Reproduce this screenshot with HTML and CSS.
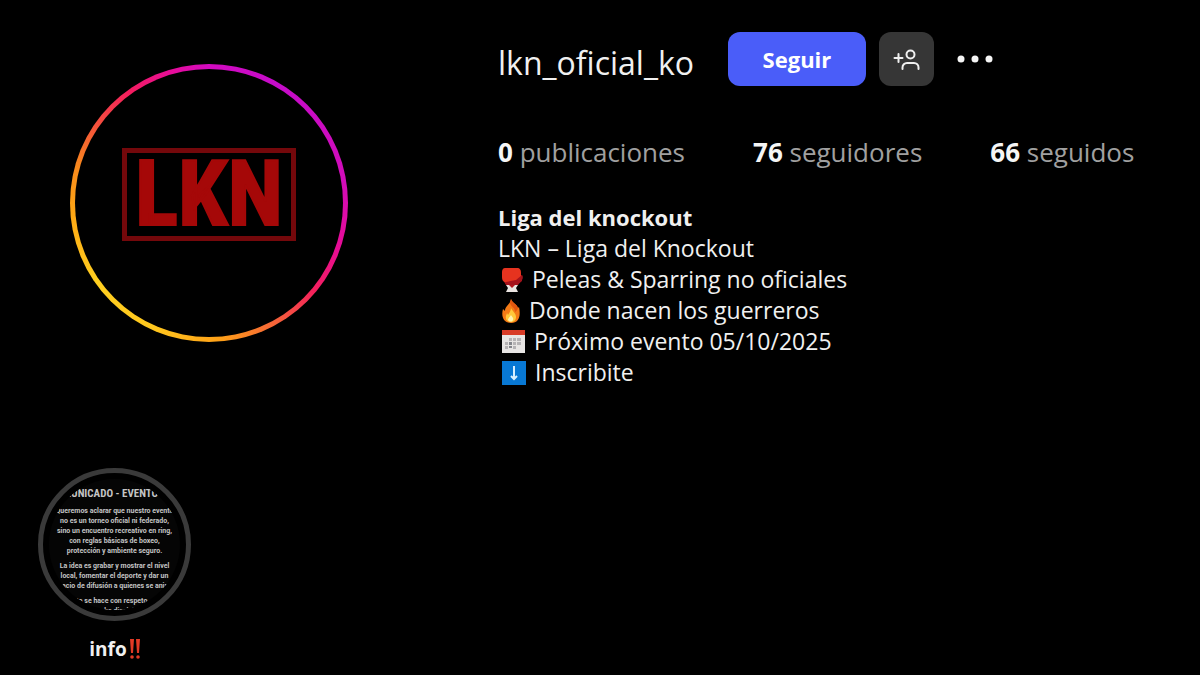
FILE: index.html
```
<!DOCTYPE html>
<html lang="es">
<head>
  <meta charset="utf-8">
  <meta name="viewport" content="width=device-width, initial-scale=1">
  <title>lkn_oficial_ko</title>
  <link rel="stylesheet" href="styles.css">
</head>
<body>
  <main class="profile">
    <header class="profile-header">
      <a href="#" class="avatar" aria-label="Foto del perfil de lkn_oficial_ko">
        <span class="avatar-photo"><span class="logo">LKN</span></span>
      </a>

      <section class="info">
        <div class="actions">
          <h1 class="username">lkn_oficial_ko</h1>
          <button type="button" class="btn btn-follow">Seguir</button>
          <button type="button" class="btn btn-similar" aria-label="Cuentas similares">
            <svg width="28" height="24" viewBox="0 0 28 24" fill="none" stroke="#f0f0f0" stroke-width="2" stroke-linecap="round">
              <path d="M2.500 11h8M6.500 7v8"/>
              <circle cx="18.500" cy="7.500" r="4"/>
              <path d="M10.500 22v-1.500a4.500 4.500 0 0 1 4.500-4.500h7a4.500 4.500 0 0 1 4.500 4.500V22"/>
            </svg>
          </button>
          <button type="button" class="btn btn-more" aria-label="Opciones">
            <svg width="36" height="8" viewBox="0 0 36 8" fill="#f5f5f5">
              <circle cx="4" cy="4" r="3.500"/>
              <circle cx="18" cy="4" r="3.500"/>
              <circle cx="32" cy="4" r="3.500"/>
            </svg>
          </button>
        </div>

        <ul class="stats">
          <li><strong>0</strong> publicaciones</li>
          <li><a href="#"><strong>76</strong> seguidores</a></li>
          <li><a href="#"><strong>66</strong> seguidos</a></li>
        </ul>

        <div class="bio">
          <p class="bio-name">Liga del knockout</p>
          <p>LKN – Liga del Knockout</p>
          <p class="bio-item">
            <svg width="21" height="24" viewBox="0 0 21 24">
              <path fill="#b3161c" d="M1 12h15l4-5c1 1 1 3 0 5l-4 5H4z"/>
              <path fill="#e6331f" d="M3 0h12c3 0 4 2 4 5v6c0 2-2 3-4 3H4c-3 0-4-2-4-5V4c0-2 1-4 3-4z"/>
              <path fill="#a5121b" d="M14 12l6-5v6l-5 4H4v-3z"/>
              <path fill="#ebe4e1" d="M4 17h12l-2 3 2 4H4l2-4z"/>
              <path fill="#b3161c" d="M7 17h6l-3 3z"/>
            </svg>
            Peleas &amp; Sparring no oficiales
          </p>
          <p class="bio-item">
            <svg width="18" height="24" viewBox="0 0 18 24">
              <path fill="#f47a16" d="M9 0c1 4 6 5 7 9l1-1c2 9 0 16-8 16S-1 17 1 10l2 2c0-5 5-6 6-12z"/>
              <path fill="#e2570f" d="M9 0c1 4 6 5 7 9-1 3-2 3-3 4 0-5-4-5-5-9z"/>
              <path fill="#ffc83a" d="M9 9c1 3 5 5 5 9 0 3-2 5-5 5s-6-2-5-6l1-3 1 2c1-2 3-4 3-7z"/>
              <path fill="#fff2b0" d="M9 16c1 2 3 3 2 5-1 2-4 2-5 0 0-2 2-3 3-5z"/>
            </svg>
            Donde nacen los guerreros
          </p>
          <p class="bio-item">
            <svg width="23" height="23" viewBox="0 0 23 23">
              <path fill="#e8e5e4" d="M0 5h23v18H0z"/>
              <path fill="#d83b27" d="M0 0h23v5H0z"/>
              <path fill="#b6b3b5" d="M7 8h3v3H7zM11 8h3v3h-3zM15 8h4v3h-4zM3 12h3v3H3zM11 12h3v3h-3zM15 12h4v3h-4zM3 16h3v3H3zM11 16h3v3h-3z"/>
              <path fill="#85868c" d="M7 12h3v3H7zM7 16h3v2H7z"/>
            </svg>
            Próximo evento 05/10/2025
          </p>
          <p class="bio-item">
            <svg width="24" height="24" viewBox="0 0 24 24">
              <path fill="#0878d4" d="M0 0h24v24H0z"/>
              <path fill="none" stroke="#d8f0ff" stroke-width="2" d="M12 5v13M9 15l3 3 3-3"/>
            </svg>
            Inscribite
          </p>
        </div>
      </section>
    </header>

    <ul class="highlights">
      <li>
        <a href="#" class="highlight">
          <span class="ring">
            <span class="cover">
              <span class="cover-title">COMUNICADO - EVENTO LKN</span>
              <span class="cover-text">
                Queremos aclarar que nuestro evento<br>
                no es un torneo oficial ni federado,<br>
                sino un encuentro recreativo en ring,<br>
                con reglas básicas de boxeo,<br>
                protección y ambiente seguro.
              </span>
              <span class="cover-text">
                La idea es grabar y mostrar el nivel<br>
                local, fomentar el deporte y dar un<br>
                espacio de difusión a quienes se animan
              </span>
              <span class="cover-text">
                Esto se hace con respeto, sin<br>
                y mucha disciplina
              </span>
            </span>
          </span>
          <span class="label">info
            <svg width="10" height="20" viewBox="0 0 10 20" fill="#e23a25">
              <path d="M0 0h4l-1 14H1zM6 0h4L9 14H7z"/>
              <circle cx="2" cy="18" r="1.800"/>
              <circle cx="8" cy="18" r="1.800"/>
            </svg>
          </span>
        </a>
      </li>
    </ul>
  </main>
</body>
</html>
```
FILE: styles.css
```
*, *:before, *:after { box-sizing: border-box; }
body {
  margin: 0;
  background-color: #000;
  color: #f0f0f0;
  font-family: "Open Sans", "Noto Sans", sans-serif;
}
h1, p, ul { margin: 0; padding: 0; font-weight: 400; }
ul { list-style: none; }
a { color: inherit; text-decoration: none; }

.profile { padding: 32px 38px 0; }
.profile-header { display: flex; align-items: flex-start; gap: 150px; padding-left: 32px; }

/* avatar with story ring */
.avatar {
  flex: none;
  width: 278px;
  height: 278px;
  margin-top: 32px;
  padding: 5px;
  border-radius: 50%;
  background: conic-gradient(#d30ac0, #c50cca 30deg, #d20cba 80deg, #e80c94 110deg, #f5205c 130deg, #f5603a 150deg, #ffa018 175deg, #ffc81e 205deg, #ffcf20 235deg, #ffa814 265deg, #f98a1c 285deg, #f5503c 305deg, #f41c60 325deg, #e60c9c 345deg, #d30ac0);
}
.avatar-photo {
  display: flex;
  align-items: center;
  justify-content: center;
  height: 100%;
  padding-bottom: 18px;
  border-radius: 50%;
  background-color: #000;
}
.logo {
  width: 174px;
  height: 93px;
  border: 5px solid #74080b;
  color: #a50808;
  font: 700 90px/84px "Roboto Condensed", "Liberation Sans Narrow", sans-serif;
  text-align: center;
  -webkit-text-stroke: 2px #a50808;
}

.info { flex: 1; min-width: 0; }

.actions { display: flex; align-items: center; }
.username { margin-right: 34px; padding-top: 8px; font-size: 32px; line-height: 44px; }
.btn {
  display: flex;
  align-items: center;
  justify-content: center;
  height: 54px;
  padding: 0;
  border: 0;
  border-radius: 12px;
  color: #fff;
  font-family: inherit;
  cursor: pointer;
}
.btn-follow { width: 138px; margin-right: 13px; background-color: #4a5df9; font-size: 22px; font-weight: 700; }
.btn-similar { width: 55px; background-color: #363636; }
.btn-more { margin-left: 23px; background: none; }

.stats { display: flex; gap: 68px; margin-top: 48px; color: #a0a0a0; font-size: 26px; line-height: 36px; white-space: nowrap; }
.stats strong { color: #f5f5f5; }

.bio { margin-top: 32px; font-size: 23px; line-height: 31px; }
.bio-name { font-size: 22px; font-weight: 700; }
.bio-item { display: flex; align-items: center; gap: 9px; padding-left: 4px; }

/* highlights */
.highlights { display: flex; margin-top: 80px; }
.highlight { display: flex; flex-direction: column; align-items: center; gap: 14px; }
.ring {
  width: 153px;
  height: 153px;
  padding: 6px;
  border: 5px solid #3a3a3a;
  border-radius: 50%;
}
.cover {
  display: flex;
  flex-direction: column;
  align-items: center;
  gap: 5px;
  height: 100%;
  padding-top: 8px;
  overflow: hidden;
  border-radius: 50%;
  background-color: #050505;
  color: #c4c4c4;
  text-align: center;
  white-space: nowrap;
}
.cover-title { font: 700 11px/14px "Roboto Condensed", "Liberation Sans Narrow", sans-serif; }
.cover-text { font: 700 7px/10px Roboto, sans-serif; }
.label { display: flex; align-items: center; gap: 3px; font-size: 19px; font-weight: 700; line-height: 28px; }
```
